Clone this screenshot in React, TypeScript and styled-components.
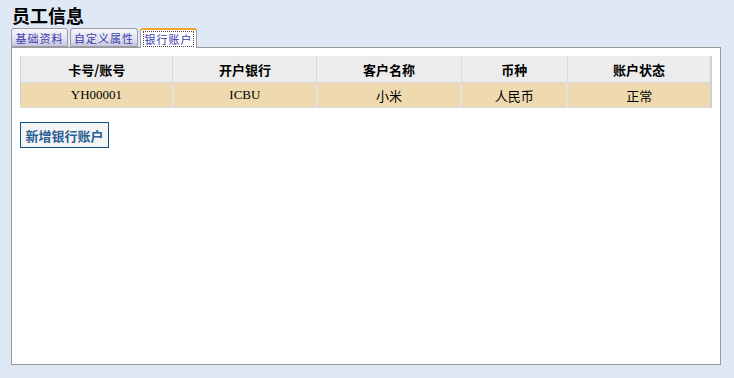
import React from "react";
import styled, { createGlobalStyle } from "styled-components";

const Global = createGlobalStyle`
  html, body { margin: 0; padding: 0; background: #dfe9f5; }
  body { font-family: "Noto Sans CJK SC", "Noto Sans", sans-serif; }
`;

const Page = styled.div`
  width: 734px;
  height: 378px;
  box-sizing: border-box;
  padding: 5px 13px 13px 11px;
  display: flex;
  flex-direction: column;
  background: #dfe9f5;
`;

const Title = styled.h1`
  margin: 0 0 0 1px;
  font-size: 18px;
  line-height: 21px;
  font-weight: bold;
  color: #000;
  font-family: "Noto Sans CJK SC", sans-serif;
`;

const TabBar = styled.div`
  display: flex;
  gap: 2px;
  margin-top: 2px;
  height: 19px;
  align-items: flex-end;
  position: relative;
  z-index: 1;
`;

const Tab = styled.div<{ $active?: boolean; $w: number }>`
  box-sizing: border-box;
  width: ${(p) => p.$w}px;
  height: ${(p) => (p.$active ? 20 : 19)}px;
  margin-bottom: ${(p) => (p.$active ? -1 : 0)}px;
  border: 1px solid #9a9aa8;
  border-bottom: ${(p) => (p.$active ? "none" : "1px solid #9a9aa8")};
  border-top: ${(p) => (p.$active ? "2px solid #f2a31f" : "1px solid #9a9aa8")};
  border-radius: 3px 3px 0 0;
  background: ${(p) =>
    p.$active ? "#fff" : "linear-gradient(#f6f6fb 0%, #e4e4f0 55%, #c6c6dc 100%)"};
  font-size: 11px;
  color: #3b3bb0;
  letter-spacing: 1px;
  display: flex;
  align-items: center;
  justify-content: center;
  padding: ${(p) => (p.$active ? "0 2px 2px" : "0")};
`;

const Focus = styled.span`
  box-sizing: border-box;
  width: 100%;
  height: 100%;
  border: 1px dotted #444;
  display: flex;
  align-items: center;
  justify-content: center;
  margin-top: 1px;
`;

const Panel = styled.div`
  flex: 1;
  background: #fff;
  border: 1px solid #9a9a9a;
  padding: 8px 8px 0 8px;
`;

const Table = styled.table`
  width: 692px;
  border-collapse: collapse;
  border-left: 1px solid #cfcfcf;
  border-right: 2px solid #cfcfcf;
  border-bottom: 1px solid #dcdcdc;
`;

const Th = styled.th<{ $w: number }>`
  width: ${(p) => p.$w}px;
  height: 26px;
  padding: 0;
  background: #ececec;
  border-right: 1px solid #d8d8d8;
  border-bottom: 1px solid #d8d8d8;
  font-size: 13px;
  font-weight: bold;
  color: #000;
  font-family: "Noto Sans CJK SC", sans-serif;
  &:last-child { border-right: none; }
`;

const Td = styled.td<{ $serif?: boolean }>`
  height: 24px;
  padding: 0;
  background: #efdab0;
  border-right: 2px solid #e2e2e2;
  text-align: center;
  font-size: 13px;
  font-weight: normal;
  color: #000;
  font-family: ${(p) =>
    p.$serif ? `"Liberation Serif", serif` : `"Noto Sans CJK SC", sans-serif`};
  &:last-child { border-right: none; }
`;

const AddButton = styled.button`
  margin-top: 14px;
  box-sizing: border-box;
  width: 89px;
  height: 26px;
  padding: 0;
  border: 1px solid #0f4f86;
  background: #f4f4f4;
  color: #2b5f96;
  font-weight: bold;
  font-size: 13px;
  font-family: "Noto Sans CJK SC", sans-serif;
  display: block;
`;

const headers: [string, number][] = [
  ["卡号/账号", 152],
  ["开户银行", 144],
  ["客户名称", 144],
  ["币种", 106],
  ["账户状态", 143],
];

const row = [
  { v: "YH00001", serif: true },
  { v: "ICBU", serif: true },
  { v: "小米" },
  { v: "人民币" },
  { v: "正常" },
];

export default function App() {
  return (
    <>
      <Global />
      <Page>
        <Title>员工信息</Title>
        <TabBar>
          <Tab $w={57}>基础资料</Tab>
          <Tab $w={68}>自定义属性</Tab>
          <Tab $w={57} $active>
            <Focus>银行账户</Focus>
          </Tab>
        </TabBar>
        <Panel>
          <Table>
            <thead>
              <tr>
                {headers.map(([h, w]) => (
                  <Th key={h} $w={w}>
                    {h}
                  </Th>
                ))}
              </tr>
            </thead>
            <tbody>
              <tr>
                {row.map((c) => (
                  <Td key={c.v} $serif={c.serif}>
                    {c.v}
                  </Td>
                ))}
              </tr>
            </tbody>
          </Table>
          <AddButton>新增银行账户</AddButton>
        </Panel>
      </Page>
    </>
  );
}
